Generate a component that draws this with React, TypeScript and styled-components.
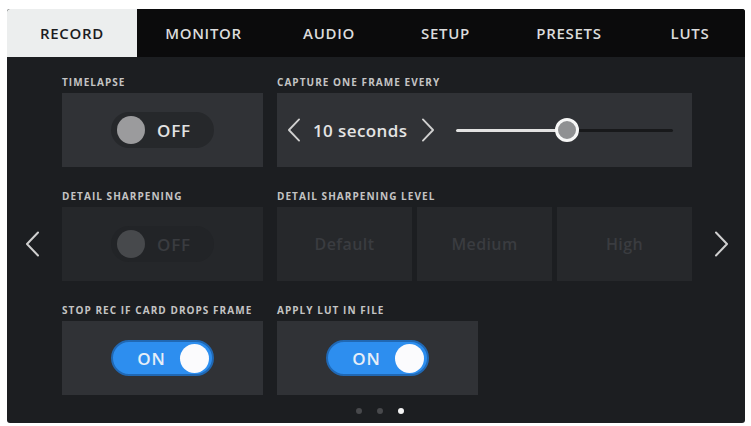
import React from "react";
import styled, { createGlobalStyle } from "styled-components";

const Global = createGlobalStyle`
  html, body { margin: 0; padding: 0; background: #ffffff; }
  body { font-family: "Open Sans", "Liberation Sans", sans-serif; }
`;

const Page = styled.div`
  width: 751px;
  height: 426px;
  padding: 9px 6px 2px 7px;
  box-sizing: border-box;
`;

const Screen = styled.div`
  width: 738px;
  height: 414px;
  background: #1c1e21;
  border-radius: 3px;
  overflow: hidden;
  display: flex;
  flex-direction: column;
`;

const TabBar = styled.div`
  display: grid;
  grid-template-columns: 130px 133px 118px 115px 132px 110px;
  height: 48px;
  background: #0b0b0c;
`;

const Tab = styled.div<{ $active?: boolean }>`
  display: flex;
  align-items: center;
  justify-content: center;
  font-size: 15px;
  font-weight: 600;
  letter-spacing: 0.7px;
  color: ${(p) => (p.$active ? "#1b1c1e" : "#dcdcdc")};
  background: ${(p) => (p.$active ? "#eceeee" : "transparent")};
`;

const Body = styled.div`
  display: grid;
  grid-template-columns: 41px 201px 415px 39px;
  grid-template-rows: repeat(3, 91px);
  column-gap: 14px;
  row-gap: 23px;
  padding-top: 19px;
`;

const Group = styled.div`
  display: flex;
  flex-direction: column;
  gap: 5px;
`;

const Label = styled.div`
  height: 12px;
  line-height: 12px;
  font-size: 10px;
  font-weight: 700;
  letter-spacing: 1.05px;
  color: #c4c4c4;
  text-transform: uppercase;
  white-space: nowrap;
`;

const Card = styled.div<{ $dim?: boolean; $w?: number }>`
  height: 74px;
  width: ${(p) => (p.$w ? `${p.$w}px` : "auto")};
  background: ${(p) => (p.$dim ? "#25272a" : "#303236")};
  display: flex;
  align-items: center;
  justify-content: center;
`;

const SliderCard = styled(Card)`
  justify-content: flex-start;
  padding: 0 19px 0 10px;
`;

const Toggle = styled.div<{ $on?: boolean; $dim?: boolean }>`
  width: 103px;
  height: 36px;
  box-sizing: border-box;
  border-radius: 18px;
  display: flex;
  align-items: center;
  flex-direction: ${(p) => (p.$on ? "row-reverse" : "row")};
  padding: ${(p) => (p.$on ? "0 3px 0 10px" : "0 4px")};
  gap: ${(p) => (p.$on ? "0" : "12px")};
  background: ${(p) => (p.$on ? "#2d8eef" : p.$dim ? "#222427" : "#26282b")};
  border: 2px solid ${(p) => (p.$on ? "#2068b4" : "transparent")};
`;

const Knob = styled.div<{ $on?: boolean; $dim?: boolean }>`
  width: ${(p) => (p.$on ? 29 : 28)}px;
  height: ${(p) => (p.$on ? 29 : 28)}px;
  border-radius: 50%;
  flex: none;
  background: ${(p) => (p.$on ? "#fbfbfd" : p.$dim ? "#47494c" : "#9b9b9d")};
`;

const ToggleText = styled.span<{ $on?: boolean; $dim?: boolean }>`
  font-size: 17px;
  font-weight: 600;
  letter-spacing: 0.8px;
  color: ${(p) => (p.$on ? "#e6eef8" : p.$dim ? "#3a3c40" : "#e2e2e2")};
  flex: 1;
  text-align: ${(p) => (p.$on ? "center" : "left")};
`;

const Value = styled.span`
  font-size: 17px;
  font-weight: 600;
  letter-spacing: 0.4px;
  color: #e4e4e4;
  margin: 0 14px 0 12px;
  white-space: nowrap;
`;

const Track = styled.div`
  position: relative;
  flex: 1;
  height: 3px;
  margin-left: 21px;
  background: #18191b;
  border-radius: 2px;
`;

const Fill = styled.div`
  height: 100%;
  background: #e2e2e2;
  border-radius: 2px;
`;

const Thumb = styled.div`
  position: absolute;
  top: 50%;
  width: 18px;
  height: 18px;
  border: 3px solid #f6f6f6;
  border-radius: 50%;
  background: #8f9092;
  transform: translate(-50%, -50%);
`;

const Levels = styled.div`
  display: grid;
  grid-template-columns: repeat(3, 1fr);
  gap: 5px;
`;

const Level = styled(Card)`
  font-size: 16px;
  font-weight: 600;
  letter-spacing: 0.4px;
  color: #3a3c40;
  background: #26282b;
`;

const Side = styled.div<{ $right?: boolean }>`
  grid-row: 2;
  grid-column: ${(p) => (p.$right ? 4 : 1)};
  display: flex;
  align-items: flex-end;
  justify-content: ${(p) => (p.$right ? "flex-start" : "flex-end")};
  padding-bottom: 24px;
  padding-left: ${(p) => (p.$right ? "8px" : "0")};
  padding-right: ${(p) => (p.$right ? "0" : "8px")};
`;

const Dots = styled.div`
  display: flex;
  justify-content: center;
  gap: 15px;
  margin-top: 13px;
  padding-left: 7px;
`;

const Dot = styled.div<{ $active?: boolean }>`
  width: 6px;
  height: 6px;
  border-radius: 50%;
  background: ${(p) => (p.$active ? "#f4f4f4" : "#48494c")};
`;

const Chevron = ({ dir, w = 15, h = 26, color = "#cfcfcf" }: { dir: "l" | "r"; w?: number; h?: number; color?: string }) => (
  <svg width={w} height={h} viewBox="0 0 15 26">
    <path
      d={dir === "l" ? "M13 1.5 L2 13 L13 24.5" : "M2 1.5 L13 13 L2 24.5"}
      fill="none"
      stroke={color}
      strokeWidth="2"
      strokeLinecap="round"
      strokeLinejoin="round"
    />
  </svg>
);

const tabs = ["RECORD", "MONITOR", "AUDIO", "SETUP", "PRESETS", "LUTS"];

const Switch = ({ on, dim }: { on?: boolean; dim?: boolean }) => (
  <Toggle $on={on} $dim={dim}>
    <Knob $on={on} $dim={dim} />
    <ToggleText $on={on} $dim={dim}>{on ? "ON" : "OFF"}</ToggleText>
  </Toggle>
);

export default function App() {
  const pct = 51;
  return (
    <Page>
      <Global />
      <Screen>
        <TabBar>
          {tabs.map((t, i) => (
            <Tab key={t} $active={i === 0}>
              {t}
            </Tab>
          ))}
        </TabBar>
        <Body>
          <Group style={{ gridColumn: 2, gridRow: 1 }}>
            <Label>Timelapse</Label>
            <Card>
              <Switch />
            </Card>
          </Group>
          <Group style={{ gridColumn: 3, gridRow: 1 }}>
            <Label>Capture one frame every</Label>
            <SliderCard>
              <Chevron dir="l" w={14} h={24} />
              <Value>10 seconds</Value>
              <Chevron dir="r" w={14} h={24} />
              <Track>
                <Fill style={{ width: `${pct}%` }} />
                <Thumb style={{ left: `${pct}%` }} />
              </Track>
            </SliderCard>
          </Group>

          <Side>
            <Chevron dir="l" />
          </Side>
          <Group style={{ gridColumn: 2, gridRow: 2 }}>
            <Label>Detail sharpening</Label>
            <Card $dim>
              <Switch dim />
            </Card>
          </Group>
          <Group style={{ gridColumn: 3, gridRow: 2 }}>
            <Label>Detail sharpening level</Label>
            <Levels>
              <Level>Default</Level>
              <Level>Medium</Level>
              <Level>High</Level>
            </Levels>
          </Group>
          <Side $right>
            <Chevron dir="r" />
          </Side>

          <Group style={{ gridColumn: 2, gridRow: 3 }}>
            <Label>Stop rec if card drops frame</Label>
            <Card>
              <Switch on />
            </Card>
          </Group>
          <Group style={{ gridColumn: 3, gridRow: 3 }}>
            <Label>Apply LUT in file</Label>
            <Card $w={201}>
              <Switch on />
            </Card>
          </Group>
        </Body>
        <Dots>
          <Dot />
          <Dot />
          <Dot $active />
        </Dots>
      </Screen>
    </Page>
  );
}
